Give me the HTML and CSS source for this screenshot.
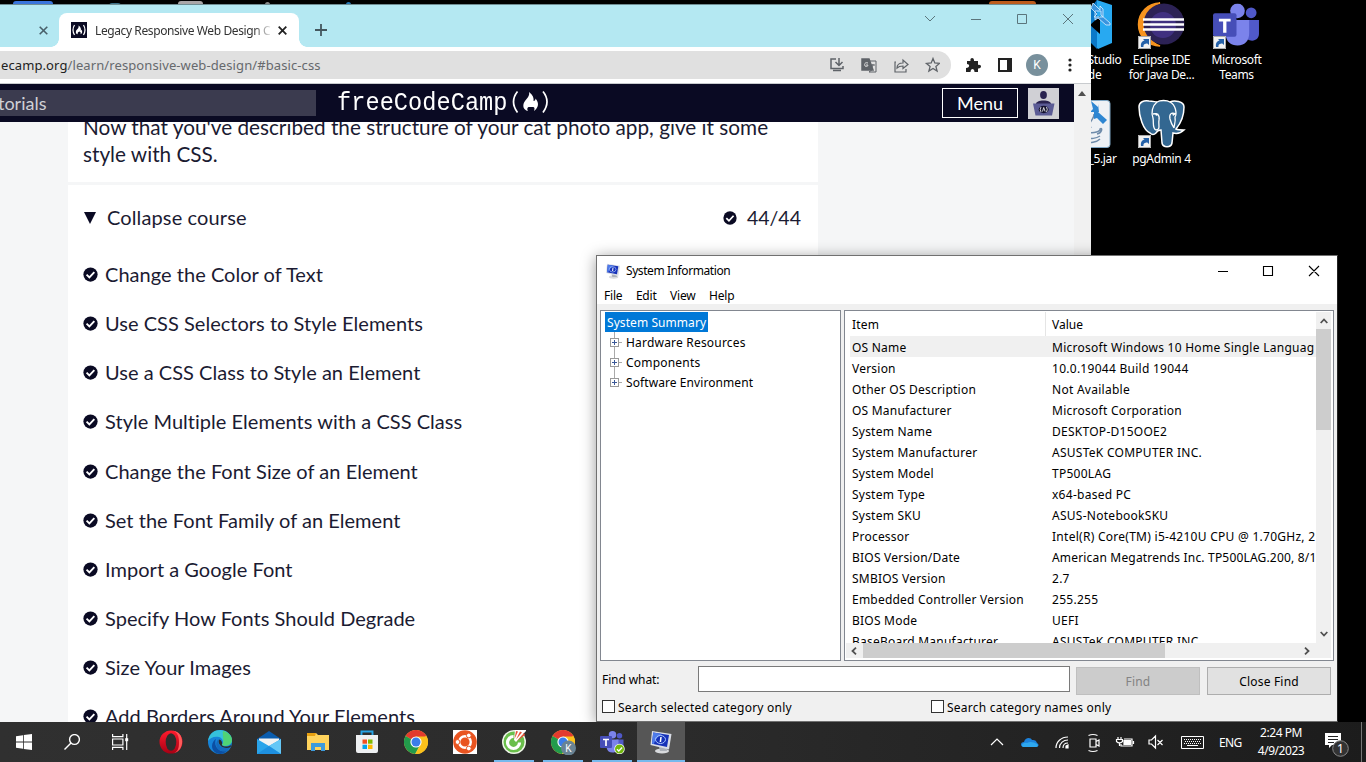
FILE: index.html
```html
<!DOCTYPE html>
<html lang="en">
<head>
<meta charset="utf-8">
<title>Desktop</title>
<link rel="stylesheet" href="styles.css">
</head>
<body>
<svg width="0" height="0" class="defs">
  <defs>
    <symbol id="check" viewBox="0 0 16 16"><circle cx="8" cy="8" r="7.6" fill="#0a0a23"/><path d="M3.8 8.2l3 3 5.3-5.8" fill="none" stroke="#fff" stroke-width="2"/></symbol>
    <symbol id="shortcut" viewBox="0 0 13 13"><path d="M0 0h13v13H0z" fill="#f2f2f2"/><path d="M.5.5h12v12H.5z" fill="none" stroke="#aaa"/><path d="M3 11c-.5-4 1-6 3.500-6.500L5 3h6v6L9.300 7.500C7 7.500 5 8.500 5.500 11z" fill="#2561a8"/></symbol>
    <symbol id="flame" viewBox="0 0 14 18"><path d="M6 0c3 2 5 5 5 8 0 1-.6 2-.6 2 1 0 1.500-1 1.500-2 3 4 2 8-2 9.500 1.500-3-.3-4-1.500-6-.5 1-1 2-2.200 1-2 2-2.700 3-1.200 5.200C0 17-1 12 3 8c2-2 4-4 3-8z"/></symbol>
    <symbol id="chrome" viewBox="0 0 24 24"><circle cx="12" cy="12" r="12" fill="#fc4"/><path d="M12 12L1.600 6A12 12 0 0 1 22.400 6z" fill="#e33b2e"/><path d="M12 12h0L1.600 6A12 12 0 0 0 11 24l5-9z" fill="#229b4b"/><path d="M12 6.500h10.700a12 12 0 0 1-11.200 17.500l5.300-9z" fill="#fbc11b"/><circle cx="12" cy="12" r="5.600" fill="#fff"/><circle cx="12" cy="12" r="4.500" fill="#3b7de9"/></symbol>
    <symbol id="teams" viewBox="0 0 48 44"><circle cx="39" cy="9.500" r="5.500" fill="#5059c9"/><circle cx="25" cy="7.500" r="7.500" fill="#7b83eb"/><path d="M33 17h14v14c0 4-3 7-7 7s-6-2-7-4z" fill="#5059c9"/><path d="M14 17h23v13c0 8-4 13-12 13-7 0-11-4-12-10z" fill="#7b83eb"/><rect y="10" width="24" height="24" rx="2" fill="#464eb8"/><path d="M6 15.500h12v3h-4.300V30h-3.400V18.500H6z" fill="#fff"/></symbol>
    <symbol id="monitor" viewBox="0 0 24 24"><ellipse cx="13" cy="21" rx="7" ry="2.600" fill="#d8dadd"/><path d="M10 17h7l1 4h-7z" fill="#abb0b8"/><path d="M3 1l19.500 3L20 19.500 1.500 15z" fill="#d9dde6"/><path d="M4.200 2.500L20 5l-2 12L3 13.700z" fill="#1631b8"/><path d="M4.200 2.500L13 4c-5 3-7 6-8 10l-2-.4z" fill="#4e7bea"/><ellipse cx="11.500" cy="9.500" rx="5" ry="4" fill="none" stroke="#a9c6ff"/><path d="M12 7l-.6 5" stroke="#fff" stroke-width="1.500"/></symbol>
  </defs>
</svg>
<div class="desktop">
  <div class="peek peek-blue"></div><div class="peek peek-grey"></div><div class="peek peek-orange"></div><div class="peek peek-tip"></div><div class="peek peek-dot"></div><div class="peek peek-dot2"></div>

  <div class="shortcut sc-code">
    <svg width="50" height="50" viewBox="0 0 50 50"><path d="M35 0l15 5v38l-14 6-20-20z" fill="#28a9f1"/><path d="M25 12l10-12v49L16 30z" fill="#0a78c8"/><path d="M38 16v18L28 25z" fill="#000"/><path d="M31 3l7 7V6l3 3v8h-9l3-3-6-6zM48 23l-9-8v-4h-6v9l3-2 8 7h4z" fill="#3a94df" stroke="#d9efff" stroke-width=".8"/></svg>
    <span>Visual Studio<br>Code</span>
  </div>
  <div class="shortcut sc-eclipse">
    <svg width="50" height="50" viewBox="0 0 50 50"><path d="M24 3a23 23 0 0 0 0 43A21.500 21.500 0 0 1 24 3z" fill="#f7941e" stroke="#f7941e" stroke-width="1.500"/><circle cx="28" cy="24" r="20.500" fill="#2c2255"/><circle cx="27" cy="25" r="13" fill="#403080"/><path d="M7 19.500h41M7 24.500h41M7 29.500h41" stroke="#fff" stroke-width="2.400"/><use href="#shortcut" x="2" y="36" width="13" height="13"/></svg>
    <span>Eclipse IDE<br>for Java De...</span>
  </div>
  <div class="shortcut sc-teams">
    <svg width="50" height="50" viewBox="0 0 50 50"><use href="#teams" x="1.500" y="3.500" width="48" height="43"/><use href="#shortcut" x="2" y="36" width="13" height="13"/></svg>
    <span>Microsoft<br>Teams</span>
  </div>
  <div class="shortcut sc-jar">
    <svg width="50" height="50" viewBox="0 0 50 50"><rect x="3" y="1.500" width="46" height="47" rx="3" fill="#eef1f5" stroke="#7ea6c4"/><path d="M26 33c7 2 14-1 13-3 3-2 2 4-3 5M24 38c5 3 12 1 15-1M22 42c7 3 14 1 17-2M30 29c-4-7 4-8 3-14" fill="none" stroke="#6e8baa" stroke-width="1.500"/><path d="M30 2l7 6V5l1 8h-9l3-3zM46 21l-9-8h-4v7l3-1 6 6z" fill="#2e86d2"/></svg>
    <span>_5.jar</span>
  </div>
  <div class="shortcut sc-pg">
    <svg width="50" height="50" viewBox="0 0 50 50"><path d="M14 34C7 31 3 17 3 8 3 3 8 1 13 2c4 0 6 1 8 1 3-2 10-2 13 0 4-2 14-1 14 5 0 9-3 16-8 22 2 1 5 1 8 1-3 3-7 4-11 3l-1 10c-1 5-9 5-10 0l-1-13c-2 0-4 1-5 3-2 2-4 2-6 0z" fill="#336791" stroke="#fff" stroke-width="1.500"/><path d="M21 3c-5 4-6 11-4 16 1 5-1 10 3 12 5 0 2-6 3-10 1-5-2-7-6-6M34 3c6 3 7 12 5 15 1 5-1 8-1 11M40 15c-5-2-7 0-6 5 1 4 2 6 4 9" fill="none" stroke="#fff" stroke-width="1.300"/><path d="M19 14l4 1-3 2zM36 14l4 1-3 2z" fill="#fff"/><use href="#shortcut" x="2" y="36" width="13" height="13"/></svg>
    <span>pgAdmin 4</span>
  </div>

  <section class="browser">
    <div class="tabstrip">
      <svg class="old-close" width="9" height="9" viewBox="0 0 9 9"><path d="M.7.700l7.600 7.600M8.300.700L.7 8.300" stroke="#49606a" stroke-width="1.600"/></svg>
      <div class="tab">
        <svg width="16" height="16" viewBox="0 0 16 16"><path d="M0 0h16v16H0z" fill="#0a0a23"/><path d="M3.500 3q-3 5 0 10M12.500 3q3 5 0 10" fill="none" stroke="#fff" stroke-width="1.200"/><use href="#flame" x="4.500" y="3" width="7" height="10" fill="#fff"/></svg>
        <span class="tab-title">Legacy Responsive Web Design C</span>
        <svg width="9" height="9" viewBox="0 0 9 9"><path d="M.7.700l7.600 7.600M8.300.700L.7 8.300" stroke="#222" stroke-width="1.800"/></svg>
      </div>
      <svg class="newtab" width="12" height="12" viewBox="0 0 12 12"><path d="M6 0v12M0 6h12" stroke="#44575e" stroke-width="1.800"/></svg>
      <svg class="winctl" width="152" height="12" viewBox="0 0 152 12" fill="none" stroke="#5b757c"><path d="M1 3l5 5 5-5M47 6.500h10M93.500 1.500h9v9h-9zM139 1l10 10M149 1l-10 10"/></svg>
    </div>
    <div class="toolbar">
      <div class="omnibox">
        <span class="url"><b>ecamp.org</b>/learn/responsive-web-design/#basic-css</span>
        <svg width="111" height="18" viewBox="0 0 111 18" fill="none" stroke="#5f6368" stroke-width="1.500"><path d="M7 3H2v9.500h12V10M4 14.500h8M10 2v7M6.500 6l3.500 3.500L13.500 6"/><path d="M33 3h7l4 11H33z" fill="#5f6368"/><path d="M41 5h6v11h-7l4-3M42 9h4M44 8c0 2-1 3-2 4" stroke-width="1"/><path d="M39 7c-3-1-4 1-3 3 2 1 3 0 3-1h-2" stroke="#ddd" stroke-width="1"/><path d="M67 6h-1v10h11v-3M68 12c0-4 3-5 6-5V4l5 4.500-5 4V10c-3 0-4 0-6 2z" stroke-width="1.200"/><path d="M104 2.500l1.800 4.500 4.700.4-3.600 3 1.200 4.700-4.100-2.600-4.100 2.600 1.200-4.700-3.600-3 4.700-.4z" stroke-width="1.300"/></svg>
      </div>
      <svg class="ext" width="16" height="16" viewBox="0 0 16 16"><path d="M2 4h3.500c-1-4 4-4 3.500 0h4v4c4-1 4 4 0 3.500V15H9.500c0-4-4-4-4 0H1v-4c4 0 4-4 1-4z" fill="#222"/></svg>
      <svg class="side" width="14" height="14" viewBox="0 0 14 14"><path d="M1 1h12v12H1z" fill="#fff" stroke="#222" stroke-width="2"/><path d="M9 0h5v14H9z" fill="#222"/></svg>
      <div class="avatar">K</div>
      <svg class="dots" width="4" height="14" viewBox="0 0 4 14" fill="#222"><circle cx="2" cy="2" r="1.600"/><circle cx="2" cy="7" r="1.600"/><circle cx="2" cy="12" r="1.600"/></svg>
    </div>
    <div class="viewport">
      <div class="page">
        <header class="site-head">
          <div class="search"><span>torials</span></div>
          <div class="logo"><span class="logo-text">freeCodeCamp</span><svg width="42" height="26" viewBox="0 0 42 26"><path d="M9.500 2.500q-8 10 0 21M35 2.500q8 10 0 21" fill="none" stroke="#fff" stroke-width="1.700"/><path d="M21 3c4 3 5 6 4.500 9 1.500 0 2-1 2-2.500 4 5 3 9-1.500 12.500 1-2.500.5-4-1-4h-4.500c-1.500 1-1.500 2.500-.5 4-5-1-6-6-3-10 2-3 5-5 4-9z" fill="#fff"/></svg></div>
          <div class="menu-btn">Menu</div>
          <svg class="user" width="31" height="31" viewBox="0 0 31 31"><path d="M0 0h31v31H0z" fill="#d0d0d5"/><ellipse cx="15.500" cy="7" rx="3.400" ry="3.900" fill="#2a2350"/><path d="M8 16c0-2 3-3.500 7.500-3.500S23 14 23 16z" fill="#2a2350"/><path d="M5 15.500h21.500L24 27.500H7.500z" fill="#5b5b95"/><ellipse cx="15.700" cy="21.500" rx="5" ry="3.700" fill="#15132f"/><path d="M13 19q-1.500 2.500 0 5M18.500 19q1.500 2.500 0 5M14.500 23.500l1.200-4 1.400 4" fill="none" stroke="#fff" stroke-width=".8"/></svg>
        </header>
        <main class="content">
          <p class="intro">Now that you've described the structure of your cat photo app, give it some<br>style with CSS.</p>
          <div class="course">
            <div class="course-head">
              <svg width="12" height="12" viewBox="0 0 12 12"><path d="M0 0h12L6 12z" fill="#0a0a23"/></svg>
              <span>Collapse course</span>
              <svg class="count-check" width="14" height="14"><use href="#check"/></svg>
              <span class="count">44/44</span>
            </div>
            <ul class="lessons">
              <li><svg><use href="#check"/></svg><span>Change the Color of Text</span></li>
              <li><svg><use href="#check"/></svg><span>Use CSS Selectors to Style Elements</span></li>
              <li><svg><use href="#check"/></svg><span>Use a CSS Class to Style an Element</span></li>
              <li><svg><use href="#check"/></svg><span>Style Multiple Elements with a CSS Class</span></li>
              <li><svg><use href="#check"/></svg><span>Change the Font Size of an Element</span></li>
              <li><svg><use href="#check"/></svg><span>Set the Font Family of an Element</span></li>
              <li><svg><use href="#check"/></svg><span>Import a Google Font</span></li>
              <li><svg><use href="#check"/></svg><span>Specify How Fonts Should Degrade</span></li>
              <li><svg><use href="#check"/></svg><span>Size Your Images</span></li>
              <li><svg><use href="#check"/></svg><span>Add Borders Around Your Elements</span></li>
            </ul>
          </div>
        </main>
      </div>
      <div class="page-scroll"><svg width="8" height="5" viewBox="0 0 8 5"><path d="M0 5l4-5 4 5z" fill="#505050"/></svg></div>
    </div>
  </section>

  <section class="sysinfo">
    <div class="si-title">
      <svg width="16" height="16"><use href="#monitor"/></svg>
      <span>System Information</span>
      <svg class="si-ctl" width="104" height="12" viewBox="0 0 104 12" fill="none" stroke="#000"><path d="M0 6.500h10M45.500 1.500h9v9h-9zM91 1l10 10M101 1L91 11" stroke-width="1.100"/></svg>
    </div>
    <nav class="si-menu"><span>File</span><span>Edit</span><span>View</span><span>Help</span></nav>
    <div class="panes">
      <div class="tree">
        <div class="root">System Summary</div>
        <div class="node"><i></i><span>Hardware Resources</span></div>
        <div class="node"><i></i><span>Components</span></div>
        <div class="node last"><i></i><span>Software Environment</span></div>
      </div>
      <div class="list">
        <div class="rows">
          <div class="row head"><span>Item</span><span>Value</span></div>
          <div class="row sel"><span>OS Name</span><span>Microsoft Windows 10 Home Single Languag</span></div>
          <div class="row"><span>Version</span><span>10.0.19044 Build 19044</span></div>
          <div class="row"><span>Other OS Description</span><span>Not Available</span></div>
          <div class="row"><span>OS Manufacturer</span><span>Microsoft Corporation</span></div>
          <div class="row"><span>System Name</span><span>DESKTOP-D15OOE2</span></div>
          <div class="row"><span>System Manufacturer</span><span>ASUSTeK COMPUTER INC.</span></div>
          <div class="row"><span>System Model</span><span>TP500LAG</span></div>
          <div class="row"><span>System Type</span><span>x64-based PC</span></div>
          <div class="row"><span>System SKU</span><span>ASUS-NotebookSKU</span></div>
          <div class="row"><span>Processor</span><span>Intel(R) Core(TM) i5-4210U CPU @ 1.70GHz, 2</span></div>
          <div class="row bios"><span>BIOS Version/Date</span><span>American Megatrends Inc. TP500LAG.200, 8/1</span></div>
          <div class="row"><span>SMBIOS Version</span><span>2.7</span></div>
          <div class="row"><span>Embedded Controller Version</span><span>255.255</span></div>
          <div class="row"><span>BIOS Mode</span><span>UEFI</span></div>
          <div class="row"><span>BaseBoard Manufacturer</span><span>ASUSTeK COMPUTER INC.</span></div>
        </div>
        <div class="vbar"><svg width="8" height="6" viewBox="0 0 8 6"><path d="M.7 5L4 1.500 7.300 5" fill="none" stroke="#505050" stroke-width="1.800"/></svg><div class="vthumb"></div><svg width="8" height="6" viewBox="0 0 8 6"><path d="M.7 1L4 4.500 7.300 1" fill="none" stroke="#505050" stroke-width="1.800"/></svg></div>
        <div class="hbar"><svg width="6" height="8" viewBox="0 0 6 8"><path d="M5 .7L1.500 4 5 7.300" fill="none" stroke="#505050" stroke-width="1.800"/></svg><div class="hthumb"></div><svg width="6" height="8" viewBox="0 0 6 8"><path d="M1 .7L4.500 4 1 7.300" fill="none" stroke="#505050" stroke-width="1.800"/></svg></div>
      </div>
    </div>
    <div class="find"><span class="find-label">Find what:</span><div class="find-input"></div><div class="btn off">Find</div><div class="btn">Close Find</div></div>
    <div class="checks"><span><i></i>Search selected category only</span><span><i></i>Search category names only</span></div>
  </section>

  <footer class="taskbar">
    <div class="pins">
      <div class="app"><svg width="16" height="16" viewBox="0 0 16 16" fill="#fff"><path d="M0 2.200L7 1.200v6.400H0zM7.800 1L16 0v7.600H7.800zM0 8.400h7v6.400l-7-1zM7.800 8.400H16V16l-8.200-1.100z"/></svg></div>
      <div class="app"><svg width="16" height="16" viewBox="0 0 16 16" fill="none" stroke="#fff" stroke-width="1.400"><circle cx="10.500" cy="5.500" r="4.900"/><path d="M7 9L.5 15.500"/></svg></div>
      <div class="app first"><svg width="17" height="16" viewBox="0 0 17 16" fill="none" stroke="#fff" stroke-width="1.200"><path d="M.6 0v2.600h10.300V0M.6 16v-2.600h10.300V16M.6 5h10.300v6H.6zM14.700 0v16"/><path d="M13.200 4.200h3v3h-3z" fill="#fff" stroke="none"/></svg></div>
      <div class="app"><svg width="24" height="24" viewBox="0 0 24 24"><defs><linearGradient id="op" x2="0" y2="1"><stop stop-color="#ff1b2d"/><stop offset="1" stop-color="#a70014"/></linearGradient></defs><ellipse cx="12" cy="12" rx="11.500" ry="11.500" fill="url(#op)"/><path d="M14 .8c12 1 12 20 1 22.400 4-2 5-5 5-11S18 2 14 .8z" fill="#ff5a5a"/><ellipse cx="12" cy="12" rx="5.300" ry="8.700" fill="#2d2d2d"/></svg></div>
      <div class="app"><svg width="24" height="24" viewBox="0 0 24 24"><circle cx="12" cy="12" r="12" fill="#1683d8"/><path d="M0 11C1 3 7 0 12 0c7 0 12 5 12 10 0 6-8 7-10 5 2-2 1-7-3-8-5-1-9 1-11 4z" fill="#35c1dc"/><path d="M15 1c5 1 9 5 9 9 0 6-8 7-10 5 3-4 0-10 1-14z" fill="#57d75b" opacity=".8"/><path d="M8 9c-3 7 3 14 11 12-6 6-15 2-15-5 0-3 2-6 4-7z" fill="#0c4fa3"/><path d="M10.500 9c-2 7 5 11 12 8l-3 4C10 23 5 15 10.500 9z" fill="#1469bd"/><path d="M11 9.500c2 0 4 3 2.800 5.500 2 2 6 2 9 0v2C16 20 9 15 11 9.500z" fill="#2d2d2d"/></svg></div>
      <div class="app"><svg width="24" height="23" viewBox="0 0 24 23"><path d="M0 8L12 0l12 8v4H0z" fill="#0a5cad"/><path d="M2 7.500h20V15L12 17 2 15z" fill="#f2f2f2"/><path d="M0 8l12 7L24 8v15H0z" fill="#2aa4ea"/><path d="M24 8v15L12 15z" fill="#65c7f6"/><path d="M24 23H0l12-8z" fill="#1e90e0"/></svg></div>
      <div class="app"><svg width="22" height="18" viewBox="0 0 22 18"><path d="M0 0h9l2 2h11v15H0z" fill="#ffd35c"/><path d="M0 0h9l-1 3H0z" fill="#e8a010"/><path d="M4 10h14v8h-4v-4H8v4H4z" fill="#3d9bdc"/></svg></div>
      <div class="app"><svg width="24" height="24" viewBox="0 0 24 24"><path d="M6.500 7V1.500h11V7" fill="none" stroke="#26a4e6" stroke-width="1.900"/><path d="M1 5h22v16q0 2-2 2H3q-2 0-2-2z" fill="#eef0f2"/><path d="M7.500 9.500H12v4.200H7.500z" fill="#f25022"/><path d="M13 9.500h4.500v4.200H13z" fill="#7fba00"/><path d="M7.500 14.700H12V19H7.500z" fill="#00a4ef"/><path d="M13 14.700h4.500V19H13z" fill="#ffb900"/></svg></div>
      <div class="app"><svg width="24" height="24"><use href="#chrome"/></svg></div>
      <div class="app"><svg width="24" height="24" viewBox="0 0 24 24"><path d="M0 0h24v24H0z" fill="#fff"/><circle cx="12" cy="12" r="11.800" fill="#e95420"/><circle cx="12" cy="12" r="5.800" fill="none" stroke="#fff" stroke-width="2.400"/><g fill="#fff" stroke="#e95420"><circle cx="4.500" cy="12" r="2.400"/><circle cx="15.800" cy="5.500" r="2.400"/><circle cx="15.800" cy="18.500" r="2.400"/></g></svg></div>
      <div class="app open"><svg width="24" height="24" viewBox="0 0 24 24"><circle cx="12" cy="12" r="12" fill="#eef5e8"/><circle cx="12" cy="12" r="10.500" fill="#6abf4b"/><path d="M11.500 6.500a6 6 0 1 0 6 6" fill="none" stroke="#fff" stroke-width="3.200"/><path d="M12 10l1-10h11v1L14 12z" fill="#fff"/><path d="M12.500 9l1.500-8 2 .5zM14 9.500l4-8 2 1zM15 11l7-8 1 2z" fill="#e5533a"/></svg></div>
      <div class="app open"><svg width="26" height="26" viewBox="0 0 26 26"><use href="#chrome" x="1" y="1" width="24" height="24"/><circle cx="18.500" cy="19" r="7.500" fill="#698394"/><text x="18.500" y="22.700" fill="#fff" font-size="10" text-anchor="middle" font-family="Roboto, sans-serif">K</text></svg></div>
      <div class="app open"><svg width="26" height="24" viewBox="0 0 26 24"><use href="#teams" x="1" y="1" width="24" height="22"/><circle cx="20.500" cy="19" r="5.200" fill="#fff"/><circle cx="20.500" cy="19" r="4.500" fill="#72b70f"/><path d="M18 19.200l1.800 1.800 3.300-3.500" fill="none" stroke="#fff" stroke-width="1.300"/></svg></div>
      <div class="app open active"><svg width="24" height="24"><use href="#monitor"/></svg></div>
    </div>
    <div class="tray">
      <svg width="204" height="24" viewBox="0 0 204 24" fill="none" stroke="#fff" stroke-width="1.200">
        <path d="M2 15l6-6 6 6"/>
        <path d="M36 17h-1c-4 0-4-5 0-5 1-5 7-5 8-2 4 0 4 1 5 3 3 2 1 4-1 4z" fill="#1c82dc" stroke="none"/><path d="M34 17c-3-2 1-5 4-4 3-2 7-1 10 1 2 2 0 3-1 3z" fill="#2ea8ef" stroke="none"/>
        <path d="M67 18c0-6 5-11 12-11M70.500 18c0-5 4-8 8.500-8M74 18c0-3 2-5 5-5"/><path d="M77 18v-2l2-1v3z" fill="#fff"/>
        <path d="M101 9h6v8h-6zM107 11.500l3-1.500v6l-3-1.500M99.500 5.500q4.500-2 9 0M99.500 20.500q4.500 2 9 0"/>
        <path d="M135 9h8v7h-11v-2M144.500 11v3M129 7v2M132 7v2M127.500 9.500h6v2q-3 3-6 0zM130.500 13v3"/><path d="M135 10.500h6.500v4H135z" fill="#fff"/>
        <path d="M160 10h2.500l4-4v12l-4-4H160zM168.500 10l5 5M173.500 10l-5 5"/>
      </svg>
      <svg class="kbd" width="23" height="13" viewBox="0 0 23 13" fill="none" stroke="#fff"><path d="M.5.500h22v12H.5z"/><path d="M3 3.500h17M4 5.500h15M3 7.500h17" stroke-dasharray="1 1"/><path d="M6 9.500h11"/></svg>
      <span class="lang">ENG</span>
      <div class="clock"><span>2:24 PM</span><span>4/9/2023</span></div>
      <svg class="notice" width="25" height="26" viewBox="0 0 25 26"><path d="M0 2h16v12H7l-3 3v-3H0z" fill="#fff"/><path d="M3 5.500h10M3 8.500h10M3 11.500h6" stroke="#222"/><circle cx="15.500" cy="17.500" r="7.800" fill="#333" stroke="#888"/><text x="15.500" y="22" fill="#fff" font-size="12" text-anchor="middle" font-family="Noto Sans, sans-serif">1</text></svg>
      <div class="peekline"></div>
    </div>
  </footer>
</div>
</body>
</html>
```
FILE: styles.css
```css
* { box-sizing: border-box; }
body { margin: 0; background: #000; overflow: hidden; }
svg { display: block; flex: none; }
.defs { position: absolute; }
.desktop { position: relative; width: 1366px; height: 762px; overflow: hidden; background: #000; font-family: "Noto Sans", sans-serif; }
.peek { position: absolute; top: 1px; height: 4px; border-radius: 3px 3px 0 0; }
.peek-blue { left: 13px; width: 40px; background: #3974dc; }
.peek-grey { left: 178px; width: 25px; background: #aaa6a8; }
.peek-orange { left: 989px; width: 47px; background: #bd5b1c; }
.peek-tip { left: 109px; top: 3px; width: 12px; background: #3d7188; }
.peek-dot { left: 265px; top: 2px; width: 5px; background: #888; }
.peek-dot2 { left: 346px; top: 2px; width: 5px; background: #2477b5; }

.shortcut { position: absolute; width: 76px; display: flex; flex-direction: column; align-items: center; gap: 2px; color: #fff; font-size: 12px; line-height: 15px; text-align: center; letter-spacing: -0.35px; white-space: nowrap; }
.shortcut span { padding-left: 1px; }
.sc-code { left: 1049px; top: 0; }
.sc-eclipse { left: 1123px; top: 0; }
.sc-teams { left: 1198px; top: 0; }
.sc-jar { left: 1048px; top: 99px; }
.sc-jar span { padding-left: 33px; }
.sc-pg { left: 1123px; top: 99px; }

.browser { position: absolute; left: 0; top: 4px; width: 1091px; height: 718px; border-top: 1px solid #6f8d93; background: #fff; overflow: hidden; }
.tabstrip { display: flex; height: 42px; background: #b4e8f2; }
.old-close { margin: 21px 0 0 39px; }
.tab { position: relative; display: flex; align-items: center; width: 240px; height: 34px; margin: 8px 0 0 11px; padding: 0 12px; border-radius: 8px 8px 0 0; background: #fff; }
.tab::before, .tab::after { content: ""; position: absolute; bottom: 0; width: 8px; height: 8px; }
.tab::before { left: -8px; background: radial-gradient(circle at 0 0, transparent 7.500px, #fff 8px); }
.tab::after { right: -8px; background: radial-gradient(circle at 100% 0, transparent 7.500px, #fff 8px); }
.tab-title { flex: none; width: 178px; margin: 0 5px 0 8px; overflow: hidden; color: #333; font-size: 12px; letter-spacing: -0.4px; white-space: nowrap; -webkit-mask-image: linear-gradient(90deg, #000 89%, transparent); }
.newtab { margin: 19px 0 0 16px; }
.winctl { margin: 8px 0 0 597px; }
.toolbar { display: flex; align-items: center; height: 37px; border-bottom: 1px solid #c8cbce; }
.omnibox { display: flex; align-items: center; width: 951px; height: 28px; border-radius: 0 14px 14px 0; background: #e0e0e0; }
.url { width: 829px; padding-left: 1px; color: #66696d; font-size: 13px; letter-spacing: 0.1px; white-space: nowrap; }
.url b { color: #222; font-weight: 400; }
.ext { margin-left: 14px; }
.side { margin-left: 17px; }
.avatar { width: 22px; height: 22px; margin-left: 14px; border-radius: 50%; background: #78909c; color: #fff; font: 12px/22px Roboto, sans-serif; text-align: center; }
.dots { margin-left: 20px; }
.viewport { display: flex; height: 638px; }
.page { width: 1074px; background: #f5f6f7; overflow: hidden; font-family: Lato, sans-serif; color: #1b1b32; }
.page-scroll { width: 17px; padding: 7px 0 0 4px; background: #f1f1f1; }
.site-head { position: relative; z-index: 1; display: flex; height: 38px; background: #0a0a23; color: #fff; }
.search { width: 316px; height: 26px; margin-top: 6px; overflow: hidden; background: #3b3b4f; color: #d0d0d5; font-size: 18px; line-height: 27px; }
.search span { margin-left: -2px; }
.logo { display: flex; align-items: center; width: 216px; height: 36px; margin-left: 21px; }
.logo-text { padding-top: 1px; font: 23.600px/30px "Liberation Mono", monospace; letter-spacing: 0.05px; transform: scaleY(1.08); }
.menu-btn { width: 76px; height: 30px; margin: 4px 0 0 389px; border: 1px solid #fff; font-size: 18px; line-height: 28px; text-align: center; }
.user { margin: 4px 0 0 10px; }
.content { width: 750px; margin-left: 68px; background: #fff; }
.intro { height: 60px; margin: 0; padding: 0 15px; font-size: 20.750px; line-height: 27px; white-space: nowrap; position: relative; top: -8px; }
.course { height: 560px; border-top: 3px solid #f5f6f7; }
.course-head { display: flex; align-items: center; height: 65px; padding: 0 17px 0 16px; font-size: 20px; letter-spacing: 0.13px; }
.course-head span { margin: -2px 0 0 11px; }
.course-head .count { margin: 0 0 0 10px; font-size: 19.500px; letter-spacing: 0; }
.count-check { margin-left: auto; }
.lessons { margin: 0; padding: 0 15px; list-style: none; font-size: 20px; letter-spacing: 0.03px; font-variant-ligatures: none; }
.lessons li { display: flex; align-items: center; gap: 7px; height: 49.140px; }
.lessons span { margin-top: -1px; }
.lessons svg { width: 15px; height: 15px; }

.sysinfo { position: absolute; left: 596px; top: 255px; width: 742px; height: 467px; border: 1px solid #707070; border-right-color: #222; background: #f0f0f0; box-shadow: 0 2px 14px rgba(0,0,0,.4); color: #000; font-size: 12px; line-height: 16px; }
.si-title { display: flex; align-items: center; height: 30px; padding-left: 8px; background: #fff; }
.si-title span { margin-left: 5px; width: 592px; letter-spacing: -0.42px; }
.si-menu { display: flex; gap: 13.500px; height: 18px; padding: 2px 0 0 7px; background: #fff; letter-spacing: -0.2px; }
.panes { display: flex; gap: 3px; padding: 6px 3px 0; }
.tree { width: 241px; height: 351px; padding: 1px 4px; border: 1px solid #828790; background: #fff; }
.root { width: 103px; height: 20px; padding-left: 2px; background: #0078d7; color: #fff; line-height: 22px; letter-spacing: 0.070px; white-space: nowrap; }
.node { display: flex; align-items: center; height: 20px; padding-left: 4px; background: linear-gradient(#aaa,#aaa) 9px 0/1px 100% no-repeat, linear-gradient(90deg,#aaa,#aaa) 14px 10px/3px 1px no-repeat; letter-spacing: 0.200px; }
.node span { padding-top: 2px; }
.node.last { background-size: 1px 10px, 3px 1px; letter-spacing: 0.080px; }
.node i { width: 9px; height: 9px; margin: 0 7px 0 1px; border: 1px solid #999; background: linear-gradient(#3b5998,#3b5998) 1px 3px/5px 1px no-repeat, linear-gradient(#3b5998,#3b5998) 3px 1px/1px 5px no-repeat, #fff; }
.list { display: grid; grid-template: 331px 15px / 470px 15px; width: 490px; height: 351px; padding: 1px 1px 3px 1px; border: 1px solid #828790; background: #fff; }
.rows { overflow: hidden; padding-left: 4px; white-space: nowrap; letter-spacing: 0.270px; }
.row { display: flex; height: 21px; line-height: 24px; padding-left: 2px; }
.row span:first-child { flex: none; width: 200px; letter-spacing: 0.220px; }
.row.head { height: 24px; line-height: 25px; letter-spacing: 0; background: linear-gradient(#e5e5e5,#e5e5e5) 195px 0/1px 100% no-repeat; }
.row.sel { background: #f0f0f0; }
.row.bios { letter-spacing: 0.180px; }
.vbar { display: flex; flex-direction: column; align-items: center; padding: 6px 0 6px; background: #f0f0f0; }
.vthumb { width: 15px; height: 101px; margin: 5px 0 auto; background: #cdcdcd; }
.hbar { grid-column: 1 / 3; display: flex; align-items: center; padding: 0 21px 0 5px; background: #f0f0f0; }
.hthumb { width: 302px; height: 15px; margin: 0 auto 0 6px; background: #cdcdcd; }
.find { display: flex; height: 34px; padding: 5px 5px 0; }
.find-label { width: 96px; padding-top: 6px; letter-spacing: -0.1px; }
.find-input { width: 372px; height: 26px; border: 1px solid #7a7a7a; background: #fff; }
.btn { width: 124px; height: 28px; margin: 1px 0 0 7px; border: 1px solid #adadad; background: #e1e1e1; line-height: 27px; text-align: center; letter-spacing: 0.2px; }
.btn.off { margin-left: 6px; border-color: #bfbfbf; background: #ccc; color: #838383; }
.checks { display: flex; padding: 3px 5px 0; }
.checks span { display: flex; width: 329px; line-height: 19px; letter-spacing: 0.230px; }
.checks i { width: 13px; height: 13px; margin: 2px 3px 0 0; border: 1px solid #333; background: #fff; }

.taskbar { position: absolute; left: 0; top: 722px; display: flex; justify-content: space-between; width: 1366px; height: 40px; background: linear-gradient(90deg, #303030, #2b2b2b 50%, #1c1c1c); color: #fff; }
.pins { display: flex; gap: 1px; }
.app { display: flex; align-items: center; justify-content: center; width: 48px; height: 40px; }
.app:nth-child(-n+2) { margin-right: -1px; }
.app.first { margin-right: 2px; }
.app.open { background: linear-gradient(#76b9ed,#76b9ed) 50% 100%/40px 2px no-repeat; }
.app.active { background: linear-gradient(#76b9ed,#76b9ed) 0 100%/48px 2px no-repeat #565656; }
.tray { display: flex; align-items: center; font-size: 12px; }
.kbd { margin-left: -12px; }
.lang { width: 24px; margin-left: 15px; letter-spacing: -0.7px; }
.clock { display: flex; flex-direction: column; align-items: center; width: 56px; margin-left: 10px; line-height: 18px; letter-spacing: -0.45px; white-space: nowrap; }
.notice { margin: 4px 0 0 16px; }
.peekline { width: 1px; height: 40px; margin: 0 4px 0 11px; background: #777; }
```
